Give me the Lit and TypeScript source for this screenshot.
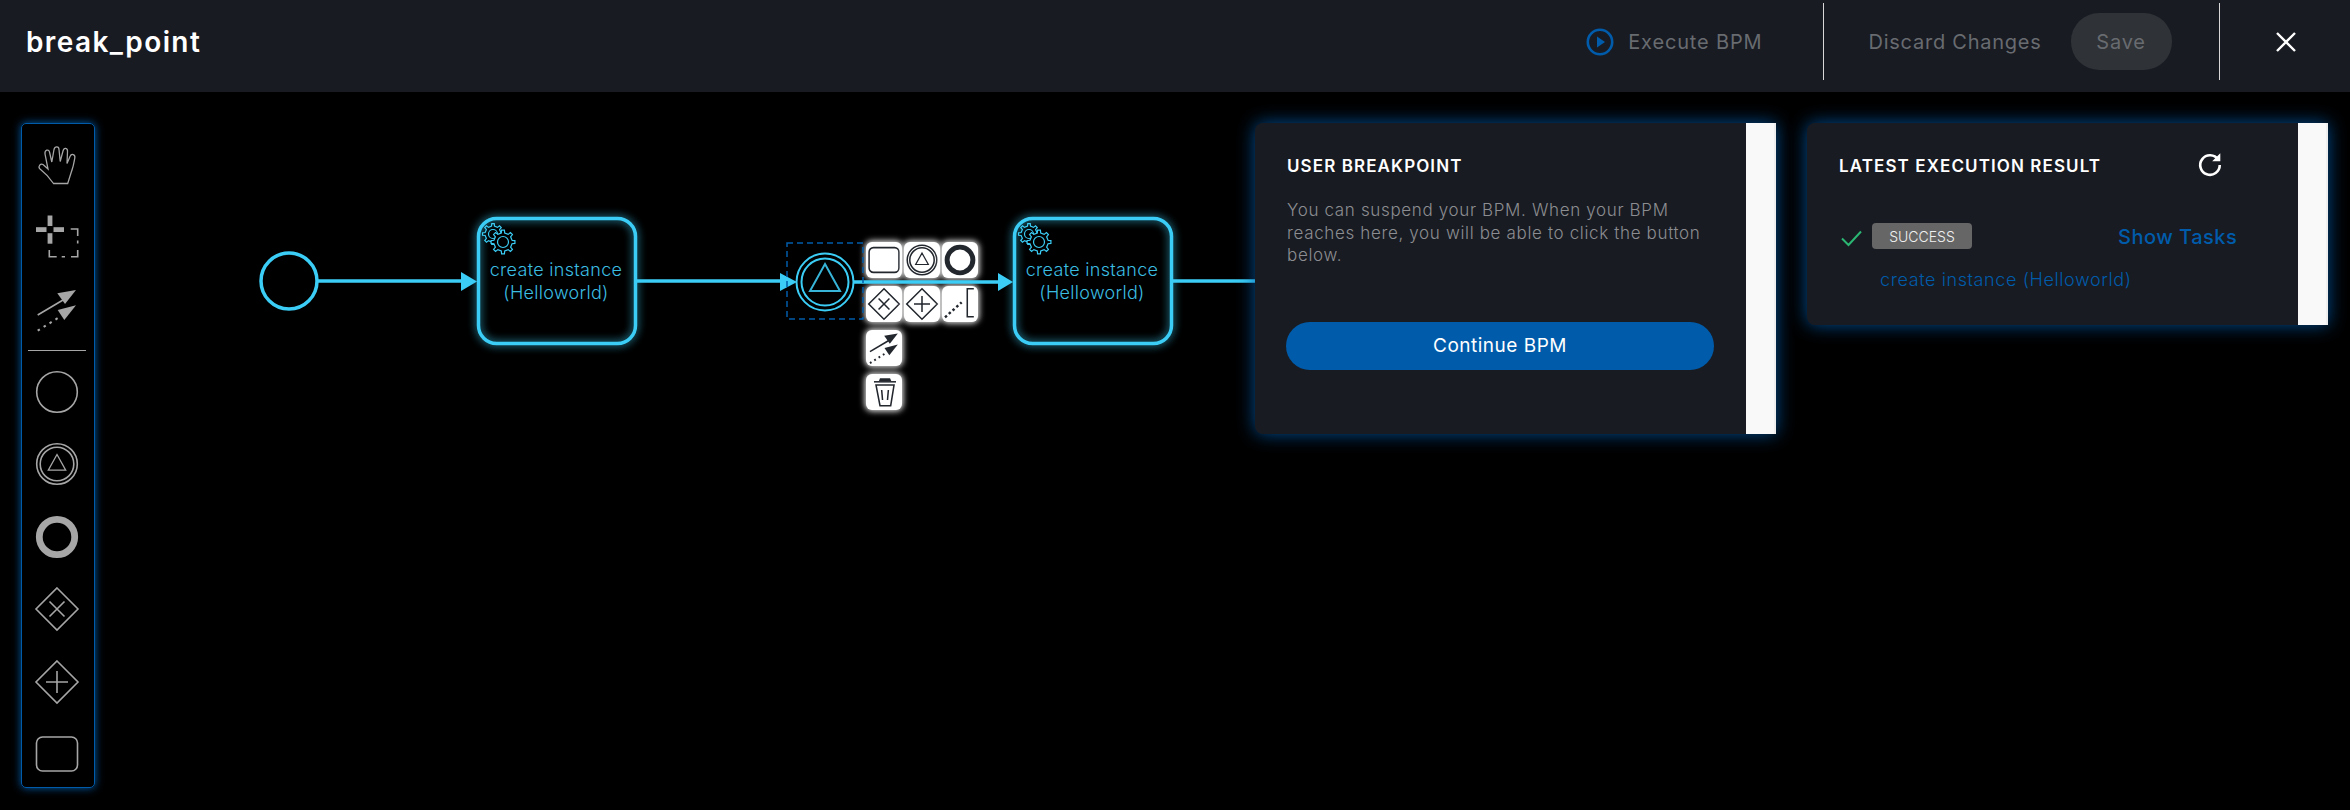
import { LitElement, html, svg, css } from 'lit';
import { customElement } from 'lit/decorators.js';

// gear outline, teeth as a stepped ring
function gearPath(cx: number, cy: number, outer: number, inner: number, teeth: number) {
  const pts: string[] = [];
  const step = (Math.PI * 2) / teeth;
  for (let i = 0; i < teeth; i++) {
    const a = i * step;
    const list: [number, number][] = [
      [a - step * 0.24, inner],
      [a - step * 0.15, outer],
      [a + step * 0.15, outer],
      [a + step * 0.24, inner],
    ];
    for (const [t, r] of list) {
      pts.push(`${(cx + Math.cos(t) * r).toFixed(2)} ${(cy + Math.sin(t) * r).toFixed(2)}`);
    }
  }
  return `M${pts.join('L')}Z`;
}

const icons: Record<string, unknown> = {
  hand: svg`<path class="s thin" d="M18.5 40.5C14 34 9 29 4.5 25.5C3 23.5 5.5 20 8 21.5L13 26L10 11C9.5 7 13.5 5.5 14.5 9L16.8 19L19 6.5C19.8 2.8 24 3 24 6.5L25.2 18.5L28 8C29 4 32.8 4.8 32.5 8.5L32 20.5L35 13.5C36.5 10 40.5 11.5 39.8 15C39 20 38 25 36 30L32.7 40.5Z"/>`,
  lasso: svg`
    <g class="f">
      <rect x="1" y="12.2" width="10.5" height="4.8"/><rect x="18.5" y="12.2" width="10.5" height="4.8"/>
      <rect x="12.6" y="0.5" width="4.8" height="10.5"/><rect x="12.6" y="18.2" width="4.8" height="10.5"/>
    </g>
    <path class="s" d="M35.7 14H42.7V21M42.7 25.5V28.5M42.7 35V41.8H36M30 41.8H26.7M21.7 41.8H14.3V35"/>`,
  connect: svg`
    <path class="s" d="M2.7 27L28 12"/>
    <path class="f" d="M41 2L22.3 5.3L30 16Z"/>
    <path class="s dots" d="M2.7 42.7L25 28.7"/>
    <path class="f" d="M41 17.3L22.7 22L29.3 32Z"/>`,
  start: svg`<circle class="s" cx="22" cy="22" r="20.3"/>`,
  breakpoint: svg`
    <circle class="s" cx="22" cy="22" r="20.3"/>
    <circle class="s" cx="22" cy="22" r="16.8"/>
    <path class="s thin" d="M22 12.5L30.7 28.2H13.3Z"/>`,
  end: svg`<circle class="s thick" cx="22" cy="22" r="17.7"/>`,
  xor: svg`<path class="s" d="M22 1L43 22L22 43L1 22ZM14.5 14.5L29.5 29.5M29.5 14.5L14.5 29.5"/>`,
  parallel: svg`<path class="s" d="M22 1L43 22L22 43L1 22ZM11 22H33M22 11V33"/>`,
  task: svg`<rect class="s" x="1.5" y="5" width="41" height="34" rx="6"/>`,
  annotation: svg`
    <path class="s dots2" d="M1.4 40.3L24.3 19.7"/>
    <path class="s" d="M41 1H32V39.5H41"/>`,
  trash: svg`
    <path class="f" d="M16.5 3.2H30.3L32 7H15Z"/>
    <path class="s" d="M8.2 8H38.5"/>
    <path class="s" d="M11 12.4H35.8L31.2 40.8H16.5ZM18.8 19.3L20 33M28 19.3L26.8 33"/>`,
};

function icon(name: string) {
  return html`<svg viewBox="0 0 44 44">${icons[name]}</svg>`;
}

function taskNode(x: number, y: number) {
  const gx = x + 16;
  const gy = y + 17;
  return svg`
    <rect class="task-glow" x=${x + 1.5} y=${y + 1.5} width="157" height="125" rx="18"/>
    <rect class="task-box" x=${x + 1.5} y=${y + 1.5} width="157" height="125" rx="18"/>
    <path class="gear" d=${gearPath(gx, gy, 10.5, 8, 8)}/>
    <circle class="gear" cx=${gx} cy=${gy} r="4.5"/>
    <path class="gear solid" d=${gearPath(gx + 10, gy + 8, 12, 9.2, 8)}/>
    <circle class="gear" cx=${gx + 10} cy=${gy + 8} r="5.5"/>
    <text class="task-text" x=${x + 79} y=${y + 59}>create instance</text>
    <text class="task-text" x=${x + 79} y=${y + 82}>(Helloworld)</text>`;
}

@customElement('app-root')
export class AppRoot extends LitElement {
  static styles = css`
    :host {
      display: flex;
      flex-direction: column;
      width: 100%;
      height: 810px;
      background: #000;
      overflow: hidden;
      font-family: Inter, 'Liberation Sans', sans-serif;
    }
    .top {
      flex: none;
      height: 92px;
      box-sizing: border-box;
      padding: 0 0 9px 26px;
      background: #181b22;
      display: flex;
      align-items: center;
      color: #686b70;
      font-size: 20px;
      letter-spacing: 0.75px;
    }
    .title {
      color: #fff;
      font-size: 28px;
      font-weight: 600;
      letter-spacing: 1.4px;
      margin-right: auto;
    }
    .play {
      width: 28px;
      height: 28px;
      margin-right: 14px;
    }
    .sep {
      width: 1px;
      height: 77px;
      background: #d8d8d8;
    }
    .execute { margin-right: 60px; letter-spacing: 0.85px; }
    .discard { margin-left: 45px; margin-right: 29px; }
    .save {
      width: 101px;
      height: 57px;
      border-radius: 28px;
      background: #2f3236;
      display: flex;
      align-items: center;
      justify-content: center;
      margin-right: 47px;
    }
    .close {
      width: 22px;
      height: 22px;
      margin-left: 55.5px;
      margin-right: 53px;
    }
    .main {
      flex: 1;
      position: relative;
      display: flex;
      align-items: flex-start;
      padding: 31px 22px 0 21px;
    }
    .toolbar {
      position: relative;
      width: 74px;
      height: 665px;
      box-sizing: border-box;
      padding: 18.5px 2px 0 0;
      border: 1.5px solid #005cab;
      border-radius: 5px;
      box-shadow: 0 0 8px #005cab;
      display: flex;
      flex-direction: column;
      align-items: center;
      gap: 28.5px;
      color: #a6a6a6;
      --s: 1.6;
    }
    .toolbar svg {
      width: 44px;
      height: 44px;
      flex: none;
    }
    .toolbar hr {
      width: 58px;
      height: 1px;
      border: 0;
      margin: -10px 0;
      background: #a6a6a6;
      flex: none;
    }
    svg { display: block; overflow: visible; }
    .s { fill: none; stroke: currentColor; stroke-width: var(--s); }
    .f { fill: currentColor; }
    .thin { stroke-width: calc(var(--s) * 0.8); }
    .thick { stroke-width: 6.8; }
    .dots { stroke-dasharray: 2.5 4.5; stroke-width: calc(var(--s) * 1.3); }
    .dots2 { stroke-dasharray: 3.5 3.5; stroke-width: calc(var(--s) * 1.6); }

    .diagram {
      position: absolute;
      left: 0;
      top: -92px;
      width: 2350px;
      height: 810px;
      pointer-events: none;
    }
    .line { fill: none; stroke: #3bcdf5; stroke-width: 3.5; }
    .head { fill: #3bcdf5; }
    .task-glow { fill: none; stroke: #3bcdf5; stroke-width: 4; filter: blur(4px); opacity: 0.8; }
    .task-box { fill: none; stroke: #3bcdf5; stroke-width: 3.5; }
    .gear { fill: none; stroke: #3bcdf5; stroke-width: 1.2; }
    .gear.solid { fill: #000; }
    .task-text {
      fill: #3bbde2;
      font-size: 18px;
      font-weight: 300;
      letter-spacing: 0.3px;
      text-anchor: middle;
    }
    .select { fill: none; stroke: #005cab; stroke-width: 1.5; stroke-dasharray: 6 4; }
    .palette {
      position: absolute;
      left: 866px;
      top: 150px;
      display: grid;
      grid-template-columns: repeat(3, 36px);
      grid-auto-rows: 36px;
      column-gap: 2px;
      row-gap: 8px;
      color: #22262d;
      --s: 2.1;
    }
    .palette div {
      background: #fff;
      border-radius: 6px;
      box-shadow: 0 0 6px 1px #fff;
      display: flex;
      align-items: center;
      justify-content: center;
    }
    .palette svg { width: 32px; height: 32px; }
    .cards {
      position: relative;
      margin-left: auto;
      display: flex;
      align-items: flex-start;
      gap: 31px;
    }
    .card {
      width: 521px;
      display: grid;
      grid-template-columns: 1fr 30px;
      background: #181b22;
      border-radius: 8px 0 0 8px;
      box-shadow: 0 0 18px rgba(0, 92, 171, 0.85);
    }
    .strip {
      background: #f9f9f9;
      border-right: 2px solid #efefef;
    }
    .body { padding: 33px 32px 0; }
    h3 {
      margin: 0;
      color: #fff;
      font-size: 17px;
      line-height: 20px;
      font-weight: 600;
      letter-spacing: 1.1px;
    }
    p {
      margin: 23px 0 55px;
      color: #8c8d91;
      font-size: 17px;
      line-height: 22.5px;
      font-weight: 300;
      letter-spacing: 0.65px;
    }
    .go {
      width: 428px;
      height: 48px;
      border-radius: 24px;
      background: #005cab;
      color: #fff;
      font-size: 19px;
      letter-spacing: 0.5px;
      display: flex;
      align-items: center;
      justify-content: center;
      margin-left: -1px;
      margin-bottom: 64px;
    }
    .head-row {
      display: flex;
      align-items: center;
      justify-content: space-between;
      padding-right: 43px;
    }
    .refresh { width: 26px; height: 26px; margin-top: -8px; margin-bottom: -4px; }
    .status {
      display: flex;
      align-items: center;
      margin-top: 47px;
      margin-left: 2px;
    }
    .check { width: 21px; height: 17px; margin-right: 10px; margin-top: 4px; }
    .badge {
      width: 100px;
      height: 26px;
      border-radius: 4px;
      background: #666;
      color: #f0f0f0;
      font-size: 14px;
      font-weight: 300;
      display: flex;
      align-items: center;
      justify-content: center;
    }
    .tasks {
      margin-left: 146px;
      margin-top: 2px;
      color: #005cab;
      font-size: 20px;
      font-weight: 500;
      letter-spacing: 0.5px;
    }
    .link {
      margin: 19px 0 33px 41px;
      color: #005cab;
      font-size: 18px;
      line-height: 24px;
      font-weight: 300;
      letter-spacing: 0.6px;
    }
  `;

  render() {
    return html`
      <div class="top">
        <span class="title">break_point</span>
        <svg class="play" viewBox="0 0 28 28">
          <circle cx="14" cy="14" r="12.2" fill="none" stroke="#005cab" stroke-width="2.6" />
          <path d="M11 8.5L19 14L11 19.5Z" fill="#005cab" />
        </svg>
        <span class="execute">Execute BPM</span>
        <span class="sep"></span>
        <span class="discard">Discard Changes</span>
        <span class="save">Save</span>
        <span class="sep"></span>
        <svg class="close" viewBox="0 0 22 22">
          <path d="M2 2L20 20M20 2L2 20" stroke="#fff" stroke-width="2.4" fill="none" />
        </svg>
      </div>
      <div class="main">
        <div class="palette">
          ${['task', 'breakpoint', 'end', 'xor', 'parallel', 'annotation'].map((n) => html`<div>${icon(n)}</div>`)}
          <div>${icon('connect')}</div>
          <span></span><span></span>
          <div>${icon('trash')}</div>
        </div>
        <svg class="diagram" viewBox="0 0 2350 810">
          <circle cx="289" cy="281" r="28" fill="none" stroke="#3bcdf5" stroke-width="3.5" />
          <path class="line" d="M318 281H465M637 281H782M854 282H1000M1173 281H1256" />
          <path class="head" d="M461 272L477 281.5L461 291Z" />
          <path class="head" d="M780 273L797 282L780 291Z" />
          <path class="head" d="M998 273L1013 282L998 291Z" />
          ${taskNode(477, 217)} ${taskNode(1013, 217)}
          <rect class="select" x="787" y="243" width="76" height="76" />
          <circle cx="825" cy="282" r="28.5" fill="#000" stroke="#3bcdf5" stroke-width="2" />
          <circle cx="825" cy="282" r="23.5" fill="none" stroke="#3bcdf5" stroke-width="2" />
          <path d="M825 264L840 291H810Z" fill="none" stroke="#37b4d8" stroke-width="2" />
        </svg>
        <div class="toolbar">
          ${icon('hand')} ${icon('lasso')} ${icon('connect')}
          <hr />
          ${icon('start')} ${icon('breakpoint')} ${icon('end')} ${icon('xor')} ${icon('parallel')} ${icon('task')}
        </div>
        <div class="cards">
          <section class="card">
            <div class="body">
              <h3>USER BREAKPOINT</h3>
              <p>You can suspend your BPM. When your BPM reaches here, you will be able to click the button below.</p>
              <div class="go">Continue BPM</div>
            </div>
            <div class="strip"></div>
          </section>
          <section class="card">
            <div class="body">
              <div class="head-row">
                <h3>LATEST EXECUTION RESULT</h3>
                <svg class="refresh" viewBox="0 0 24 24">
                  <path d="M19.5 8A9 9 0 1 0 21 13" fill="none" stroke="#fff" stroke-width="2.4" />
                  <path d="M21.5 2V9.5H14Z" fill="#fff" />
                </svg>
              </div>
              <div class="status">
                <svg class="check" viewBox="0 0 21 17">
                  <path d="M1 8.5L7.5 15L20 1.5" fill="none" stroke="#2bb673" stroke-width="2" />
                </svg>
                <span class="badge">SUCCESS</span>
                <span class="tasks">Show Tasks</span>
              </div>
              <div class="link">create instance (Helloworld)</div>
            </div>
            <div class="strip"></div>
          </section>
        </div>
      </div>
    `;
  }
}
